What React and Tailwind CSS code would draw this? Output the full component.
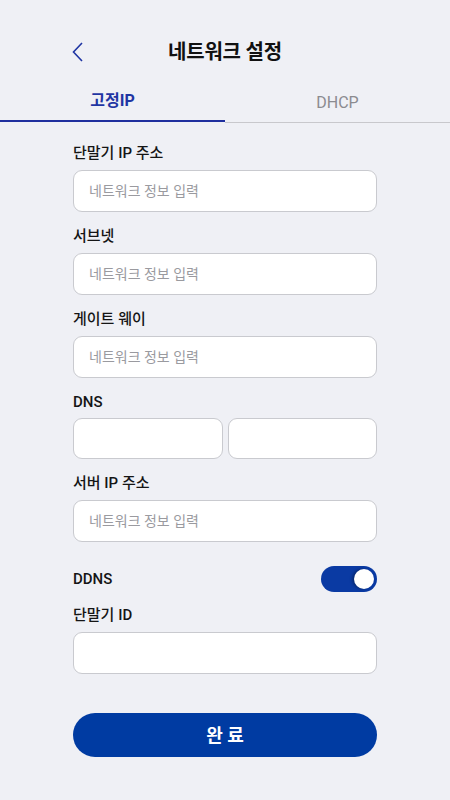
import React, { useState } from "react";

function Field({ label, placeholder = "네트워크 정보 입력" }) {
  return (
    <div className="flex flex-col">
      <label className="text-[15px] leading-[18px] font-medium text-[#151515] mb-[8px]">{label}</label>
      <input
        placeholder={placeholder}
        className="h-[42px] w-full rounded-[9px] border border-[#c9cacf] bg-white px-[15px] text-[14px] text-[#222] placeholder:text-[#9a9a9f] outline-none"
      />
    </div>
  );
}

export default function App() {
  const [tab, setTab] = useState("static");
  const [ddns, setDdns] = useState(true);

  return (
    <div
      className="min-h-screen w-[450px] h-[800px] bg-[#eff0f5] flex flex-col"
      style={{ fontFamily: 'Roboto, "Noto Sans CJK KR", sans-serif' }}
    >
      <header className="relative h-[52px] mt-[26px] flex items-center justify-center">
        <button className="absolute left-[71px] top-[15px] text-[#1f35a3]">
          <svg width="14" height="22" viewBox="0 0 14 22" fill="none">
            <path d="M11 2 L2.5 11 L11 20" stroke="currentColor" strokeWidth="1.6" />
          </svg>
        </button>
        <h1 className="text-[20px] font-bold text-[#111] tracking-[-0.2px]">네트워크 설정</h1>
      </header>

      <div className="flex mt-[8px]">
        <button
          onClick={() => setTab("static")}
          className={`flex-1 h-[36px] pb-[4px] text-[16px] ${
            tab === "static"
              ? "font-bold text-[#1f35a3] border-b-2 border-[#1f2f9e]"
              : "text-[#8b8b90] border-b border-[#c8c8cc]"
          }`}
        >
          고정IP
        </button>
        <button
          onClick={() => setTab("dhcp")}
          className={`flex-1 h-[36px] pb-[4px] text-[16px] ${
            tab === "dhcp"
              ? "font-bold text-[#1f35a3] border-b-2 border-[#1f2f9e]"
              : "text-[#8b8b90] border-b border-[#c8c8cc] mt-[1px]"
          }`}
        >
          DHCP
        </button>
      </div>

      <div className="px-[73px] pt-[21px] flex flex-col gap-[15px]">
        <Field label="단말기 IP 주소" />
        <Field label="서브넷" />
        <Field label="게이트 웨이" />
        <div className="flex flex-col">
          <label className="text-[15px] leading-[18px] font-medium text-[#151515] mb-[7px]">DNS</label>
          <div className="flex gap-[5px]">
            <input className="h-[41px] w-full min-w-0 rounded-[9px] border border-[#c9cacf] bg-white px-[12px] text-[14px] outline-none" />
            <input className="h-[41px] w-full min-w-0 rounded-[9px] border border-[#c9cacf] bg-white px-[12px] text-[14px] outline-none" />
          </div>
        </div>
        <Field label="서버 IP 주소" />

        <div className="flex items-center justify-between mt-[9px]">
          <span className="text-[15px] font-medium text-[#151515]">DDNS</span>
          <button
            onClick={() => setDdns(!ddns)}
            className={`w-[56px] h-[26px] rounded-full p-[3px] flex items-center ${
              ddns ? "bg-[#0a3aa3] justify-end" : "bg-[#c8c8cc] justify-start"
            }`}
          >
            <span className="block w-[20px] h-[20px] rounded-full bg-white shadow-[-2px_0_3px_rgba(0,0,0,0.3)]" />
          </button>
        </div>

        <div className="flex flex-col mt-[-1px]">
          <label className="text-[15px] leading-[18px] font-medium text-[#151515] mb-[8px]">단말기 ID</label>
          <input className="h-[42px] w-full rounded-[9px] border border-[#c9cacf] bg-white px-[15px] text-[14px] outline-none" />
        </div>

        <button className="mt-[24px] h-[44px] w-full rounded-full bg-[#003ba2] text-white text-[18px] font-bold">
          완 료
        </button>
      </div>
    </div>
  );
}
